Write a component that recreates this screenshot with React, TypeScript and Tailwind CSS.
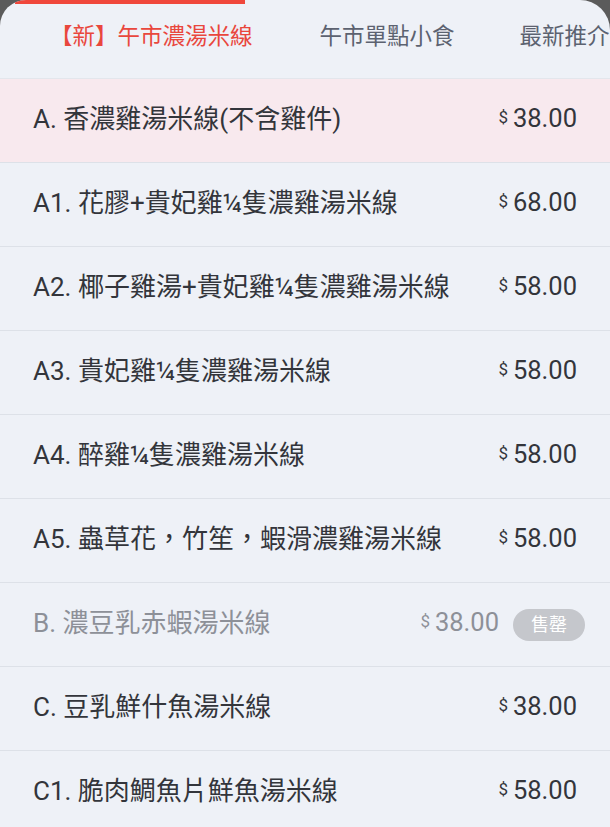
import React from "react";

const items = [
  { name: "A. 香濃雞湯米線(不含雞件)", price: "38.00", active: true },
  { name: "A1. 花膠+貴妃雞¼隻濃雞湯米線", price: "68.00" },
  { name: "A2. 椰子雞湯+貴妃雞¼隻濃雞湯米線", price: "58.00" },
  { name: "A3. 貴妃雞¼隻濃雞湯米線", price: "58.00" },
  { name: "A4. 醉雞¼隻濃雞湯米線", price: "58.00" },
  { name: "A5. 蟲草花，竹笙，蝦滑濃雞湯米線", price: "58.00" },
  { name: "B. 濃豆乳赤蝦湯米線", price: "38.00", soldOut: true },
  { name: "C. 豆乳鮮什魚湯米線", price: "38.00" },
  { name: "C1. 脆肉鯛魚片鮮魚湯米線", price: "58.00" },
];

const font = { fontFamily: 'Roboto, "Noto Sans CJK TC", sans-serif' };

export default function App() {
  return (
    <div className="w-[610px] h-[827px] overflow-hidden bg-[#5b5b5b]" style={font}>
      <div className="relative w-[610px] h-[827px] bg-[#eef1f7] rounded-tl-[26px] rounded-tr-[30px] overflow-hidden">
        <div className="absolute left-[15px] top-0 w-[230px] h-[4px] bg-[#f0473b]" />
        <div className="h-[78px] flex items-center pb-[4px] text-[22.5px] whitespace-nowrap">
          <span className="ml-[50px] text-[#e9473d]">【新】午市濃湯米線</span>
          <span className="ml-[67px] text-[#5c6270]">午市單點小食</span>
          <span className="ml-[65px] text-[#5c6270]">最新推介</span>
        </div>
        <div className="border-t border-[#e3e6ec]">
          {items.map((it, i) => (
            <div
              key={i}
              className={`h-[84px] flex items-center border-b border-[#dde1e8] pl-[33px] ${
                it.active ? "bg-[#f8e9ee]" : ""
              }`}
            >
              <span
                className={`flex-1 text-[26px] leading-none whitespace-nowrap pb-[3px] ${
                  it.soldOut ? "text-[#8d9098]" : "text-[#33353b]"
                }`}
              >
                {it.name}
              </span>
              <span
                className={`flex items-baseline leading-none pb-[3px] ${
                  it.soldOut ? "text-[#8d9098] mr-[14px]" : "text-[#33353b] mr-[33px]"
                }`}
              >
                <span className="text-[17px] mr-[5px] relative top-[-4px]">$</span>
                <span className="text-[25.5px]">{it.price}</span>
              </span>
              {it.soldOut && (
                <span className="mr-[25px] h-[32px] w-[72px] rounded-full bg-[#c5c7cc] text-white text-[18px] flex items-center justify-center">
                  售罄
                </span>
              )}
            </div>
          ))}
        </div>
      </div>
    </div>
  );
}
